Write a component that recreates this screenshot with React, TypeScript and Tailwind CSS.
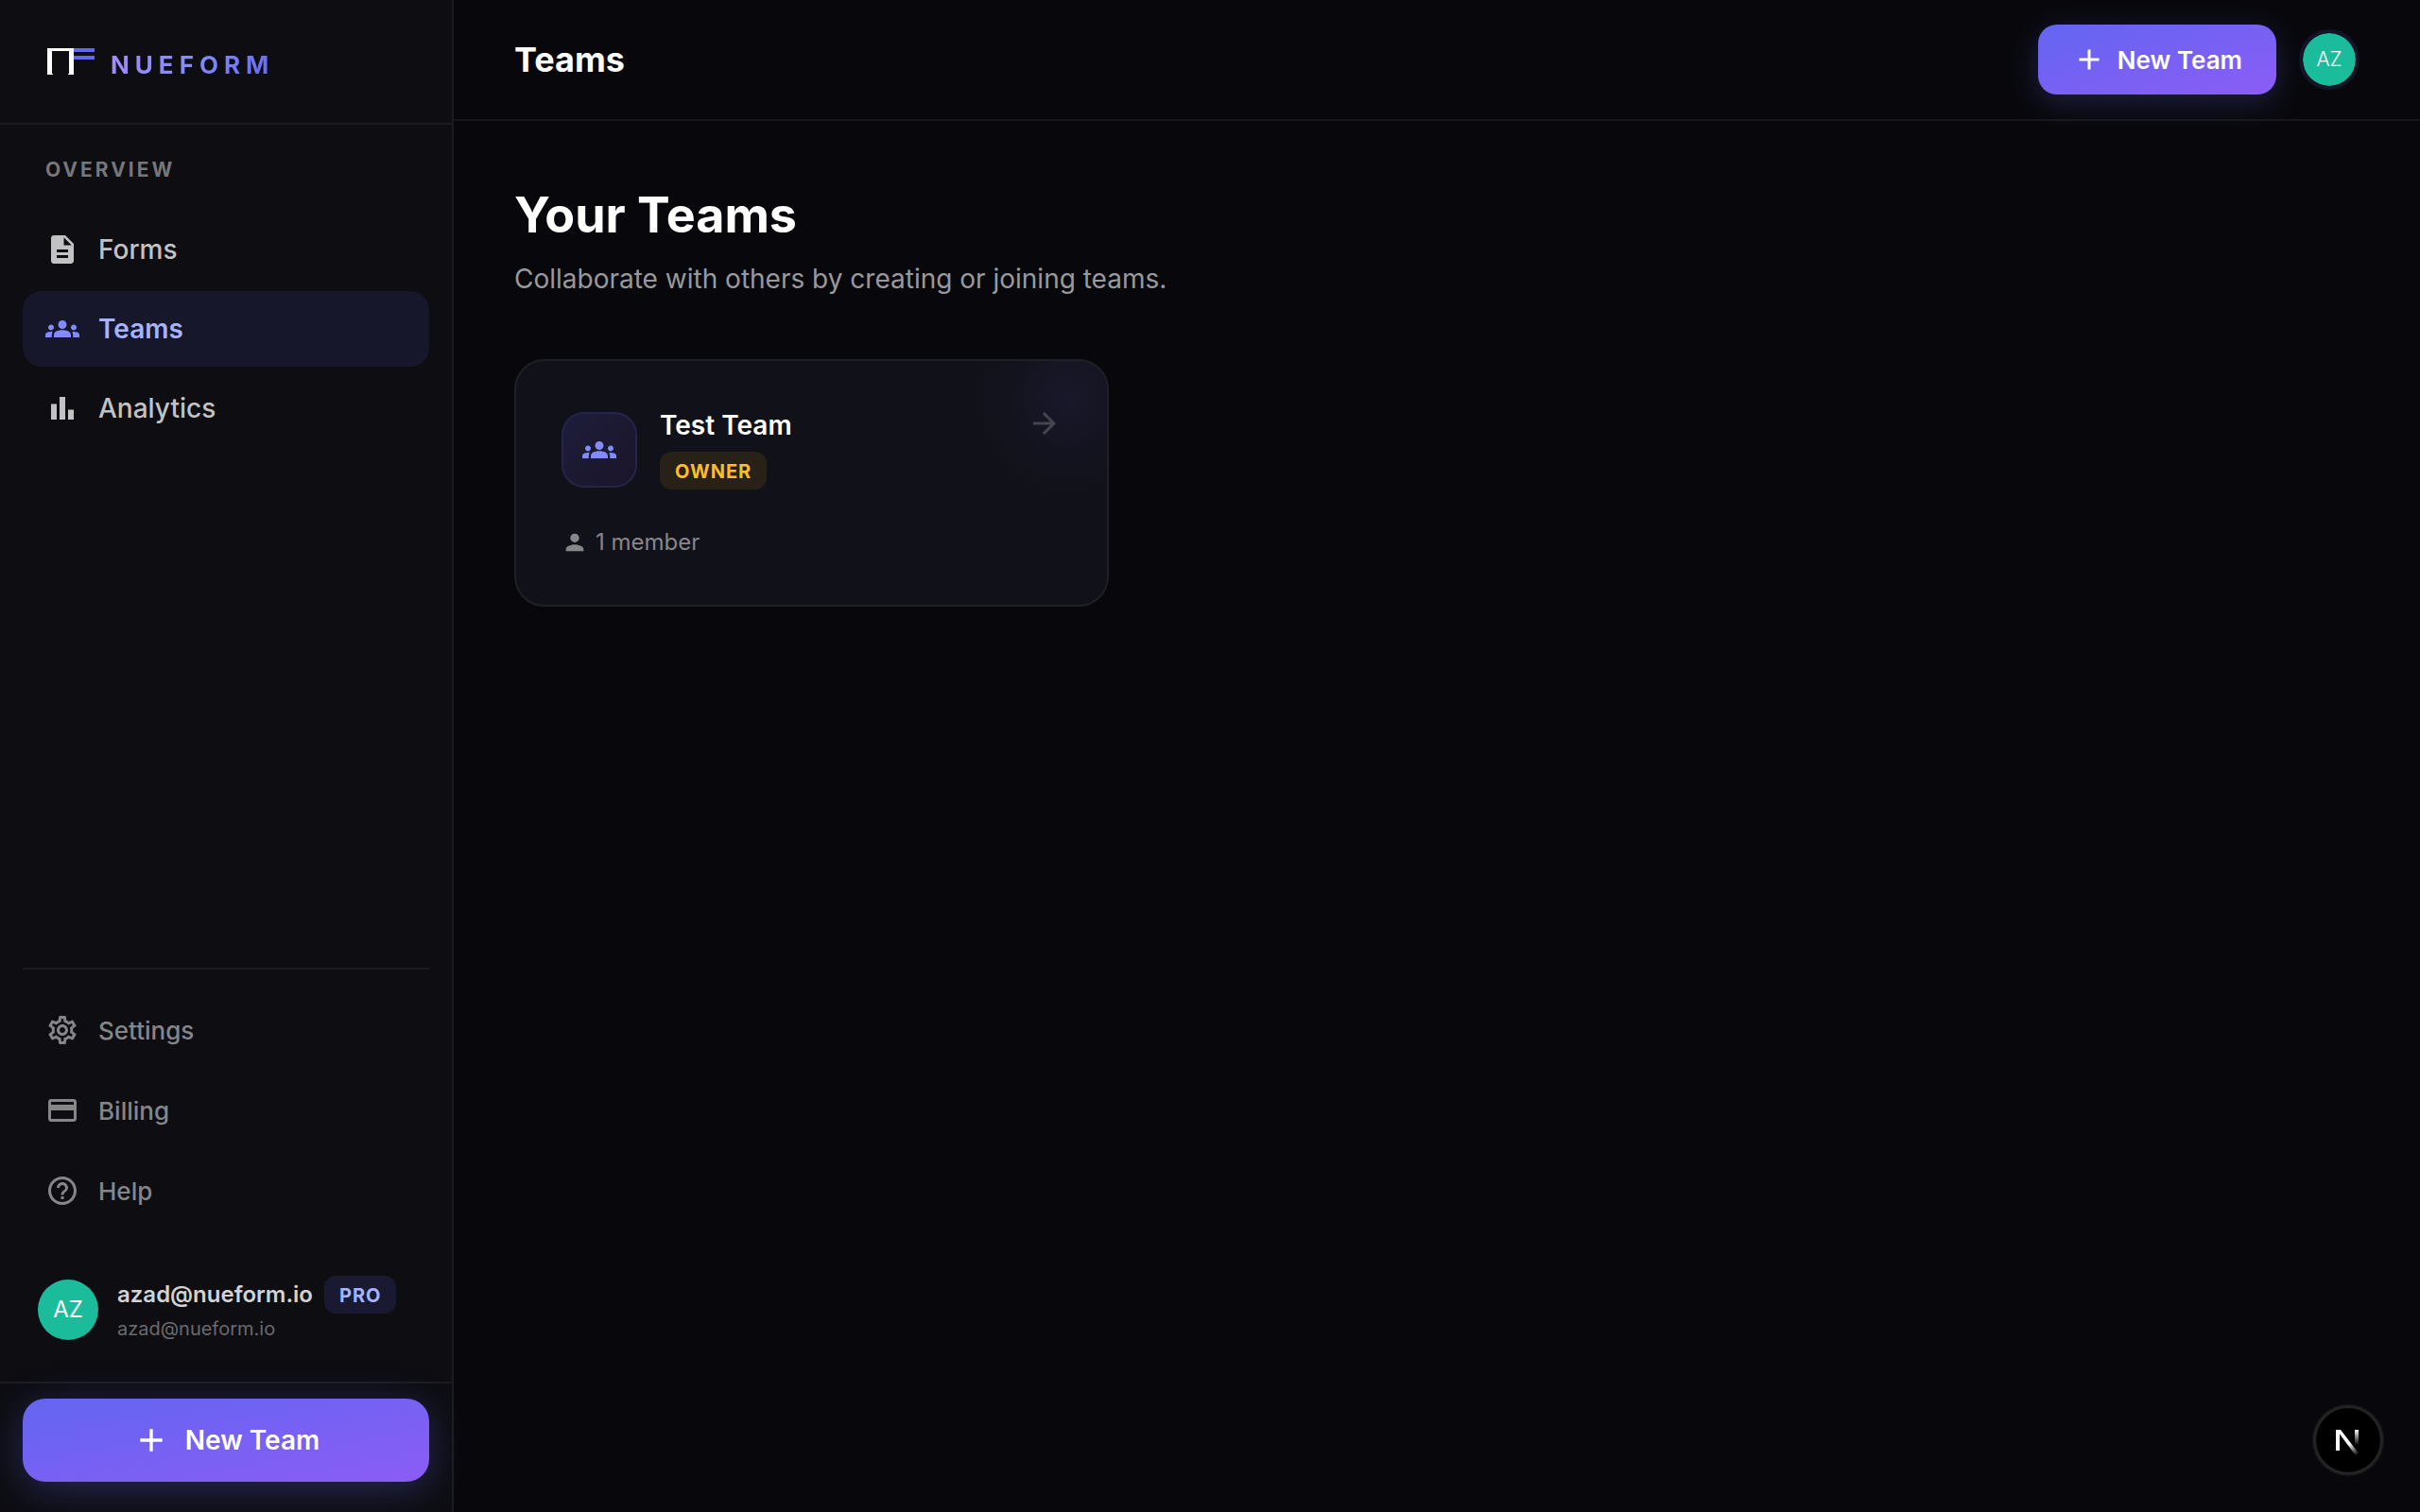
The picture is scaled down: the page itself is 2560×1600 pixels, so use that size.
import { useState } from "react";
import type { IconType } from "react-icons";
import {
	MdAdd,
	MdArrowForward,
	MdCreditCard,
	MdDescription,
	MdGroups,
	MdHelpOutline,
	MdOutlineSettings,
	MdPerson,
} from "react-icons/md";

type NavItem = {
	label: string;
	icon: IconType | typeof BarsIcon;
};

type Team = {
	name: string;
	role: string;
	members: number;
};

const mainNav: NavItem[] = [
	{ label: "Forms", icon: MdDescription },
	{ label: "Teams", icon: MdGroups },
	{ label: "Analytics", icon: BarsIcon },
];

const footerNav: NavItem[] = [
	{ label: "Settings", icon: MdOutlineSettings },
	{ label: "Billing", icon: MdCreditCard },
	{ label: "Help", icon: MdHelpOutline },
];

const teams: Team[] = [{ name: "Test Team", role: "OWNER", members: 1 }];

const user = { initials: "AZ", name: "azad@nueform.io", email: "azad@nueform.io", plan: "PRO" };

function BarsIcon({ className }: { className?: string }) {
	return (
		<svg className={className} viewBox="0 0 24 24" fill="currentColor" aria-hidden="true">
			<path d="M4 9h4v11H4zM10 4h4v16h-4zM16 13h4v7h-4z" />
		</svg>
	);
}

function Logo() {
	return (
		<a href="#" className="flex items-center gap-4">
			<svg className="w-[53px] h-7" viewBox="0 0 53 28" aria-hidden="true">
				<path d="M30 0h22v4H30zM30 8h22v4H30z" fill="#6366f1" />
				<path d="M2 0h28v28h-6V27h1V3H7v24h1v1H2z" fill="#fff" />
			</svg>
			<span className="mt-2 text-[26px] leading-8 font-bold tracking-[6px] text-transparent bg-clip-text bg-[linear-gradient(135deg,#a78bfa,#818cf8_50%,#6366f1)]">
				NUEFORM
			</span>
		</a>
	);
}

function Sidebar() {
	const [active, setActive] = useState("Teams");

	return (
		<aside className="relative z-10 flex flex-col w-[480px] shrink-0 bg-[#0d0d12] border-r-2 border-[#1c1c20]">
			<div className="flex items-center h-[132px] px-12 border-b-2 border-[#1c1c20]">
				<Logo />
			</div>

			<nav className="flex-1 px-6 pt-8">
				<h2 className="px-6 mb-7 text-[21px] leading-8 font-bold tracking-[3px] text-[#77777a]">
					OVERVIEW
				</h2>
				<ul className="flex flex-col gap-1">
					{mainNav.map(({ label, icon: Icon }) => (
						<li key={label}>
							<a
								href="#"
								onClick={() => setActive(label)}
								className={
									active === label
										? "flex items-center gap-5 h-20 px-6 rounded-[20px] bg-[#17172b] text-[28px] font-semibold text-[#a5b4fc]"
										: "flex items-center gap-5 h-20 px-6 rounded-[20px] text-[28px] font-medium text-[#c2c2c4]"
								}
							>
								<Icon
									className={active === label ? "w-9 h-9 text-[#818cf8]" : "w-9 h-9"}
								/>
								{label}
							</a>
						</li>
					))}
				</ul>
			</nav>

			<div className="mx-6 pt-6 border-t-2 border-[#1c1c20]">
				<ul className="flex flex-col gap-[5px]">
					{footerNav.map(({ label, icon: Icon }) => (
						<li key={label}>
							<a
								href="#"
								className="flex items-center gap-5 h-20 px-6 rounded-[20px] text-[26px] font-medium text-[#868689]"
							>
								<Icon className="w-9 h-9" />
								{label}
							</a>
						</li>
					))}
				</ul>
			</div>

			<div className="flex items-center gap-5 px-10 pt-[50px] pb-10">
				<div className="flex items-center justify-center w-16 h-16 rounded-full bg-[#1abc9c] text-2xl text-white">
					{user.initials}
				</div>
				<div>
					<div className="flex items-center gap-3">
						<p className="text-2xl font-semibold text-[#d3d3d4]">{user.name}</p>
						<span className="h-10 px-4 rounded-xl bg-[#191a32] text-[20px] leading-[42px] font-bold tracking-[1px] text-[#a5b4fc]">
							{user.plan}
						</span>
					</div>
					<p className="text-[20px] leading-8 text-[#6a6a6d]">{user.email}</p>
				</div>
			</div>

			<div className="px-6 pt-4 pb-8 border-t-2 border-[#1c1c20]">
				<button
					type="button"
					className="flex items-center justify-center gap-4 w-full h-[88px] rounded-3xl bg-[linear-gradient(to_bottom_right,#6366f1,#8b5cf6)] text-[28px] font-semibold text-white shadow-[0_8px_40px_rgba(99,102,241,0.3)]"
				>
					<MdAdd className="w-10 h-10" />
					New Team
				</button>
			</div>
		</aside>
	);
}

function Header() {
	return (
		<header className="flex items-center justify-between h-32 px-16 border-b-2 border-[#17171b]">
			<h1 className="text-4xl font-bold text-white">Teams</h1>
			<div className="flex items-center gap-6">
				<button
					type="button"
					className="flex items-center gap-3 h-[74px] px-9 rounded-[20px] bg-[linear-gradient(to_bottom_right,#6366f1,#8b5cf6)] text-[26px] font-semibold text-white shadow-[0_8px_32px_rgba(99,102,241,0.25)]"
				>
					<MdAdd className="w-9 h-9" />
					New Team
				</button>
				<button
					type="button"
					className="w-16 h-16 rounded-full border-4 border-[#141428] bg-[#1abc9c] bg-clip-padding text-[21px] font-light text-white"
				>
					{user.initials}
				</button>
			</div>
		</header>
	);
}

function TeamCard({ team }: { team: Team }) {
	return (
		<a
			href="#"
			className="relative overflow-hidden flex flex-col gap-[34px] p-12 rounded-[32px] border-2 border-[#1f1f26] bg-[#111119]"
		>
			<div className="absolute -top-16 -right-16 w-52 h-52 rounded-full bg-[radial-gradient(circle,rgba(99,102,241,0.08),transparent_68%)]" />
			<div className="relative flex items-start justify-between">
				<div className="flex items-center gap-6">
					<div className="flex items-center justify-center w-20 h-20 rounded-3xl border-2 border-[#25244a] bg-[linear-gradient(135deg,#1d1d3a,#1b1529)]">
						<MdGroups className="w-9 h-9 text-[#818cf8]" />
					</div>
					<div className="flex flex-col items-start gap-2 pb-1">
						<h3 className="text-[28px] leading-10 font-semibold text-white">{team.name}</h3>
						<span className="h-10 px-4 rounded-xl bg-[#282118] text-[20px] leading-[42px] font-bold tracking-[1px] text-[#fbbf24]">
							{team.role}
						</span>
					</div>
				</div>
				<MdArrowForward className="w-9 h-9 text-[#45454f]" />
			</div>
			<p className="relative flex items-center gap-2 text-2xl leading-9 text-[#87878b]">
				<MdPerson className="w-7 h-7" />
				{team.members} member
			</p>
		</a>
	);
}

function DevBadge() {
	return (
		<button
			type="button"
			aria-label="Dev tools"
			className="fixed right-10 bottom-10 z-20 flex items-center justify-center w-[72px] h-[72px] rounded-full border-2 border-[#262626] bg-black shadow-[0_0_0_2px_#1b1b1d]"
		>
			<svg className="w-[72px] h-[72px] shrink-0" viewBox="0 0 72 72" fill="none">
				<defs>
					<linearGradient id="stem" x1="44" y1="25" x2="44" y2="41" gradientUnits="userSpaceOnUse">
						<stop stopColor="#fff" />
						<stop offset="1" stopColor="#fff" stopOpacity="0" />
					</linearGradient>
					<linearGradient id="slash" x1="38" y1="39" x2="47" y2="51" gradientUnits="userSpaceOnUse">
						<stop stopColor="#fff" />
						<stop offset="1" stopColor="#fff" stopOpacity="0" />
					</linearGradient>
				</defs>
				<path d="M23 25h5l20 26-3.5 2L27 29.5V47h-4z" fill="url(#slash)" />
				<path d="M43 25h4v17h-4z" fill="url(#stem)" />
			</svg>
		</button>
	);
}

export default function App() {
	return (
		<div className="flex min-h-screen bg-[#08080c] font-['Inter',sans-serif]">
			<Sidebar />
			<div className="flex-1 min-w-0">
				<Header />
				<main className="px-16 py-16">
					<h2 className="text-[52px] leading-[72px] font-bold text-white">Your Teams</h2>
					<p className="mt-2.5 mb-16 text-[28px] leading-[42px] text-[#99999c]">
						Collaborate with others by creating or joining teams.
					</p>
					<div className="grid grid-cols-3 gap-8">
						{teams.map((team) => (
							<TeamCard key={team.name} team={team} />
						))}
					</div>
				</main>
			</div>
			<DevBadge />
		</div>
	);
}
